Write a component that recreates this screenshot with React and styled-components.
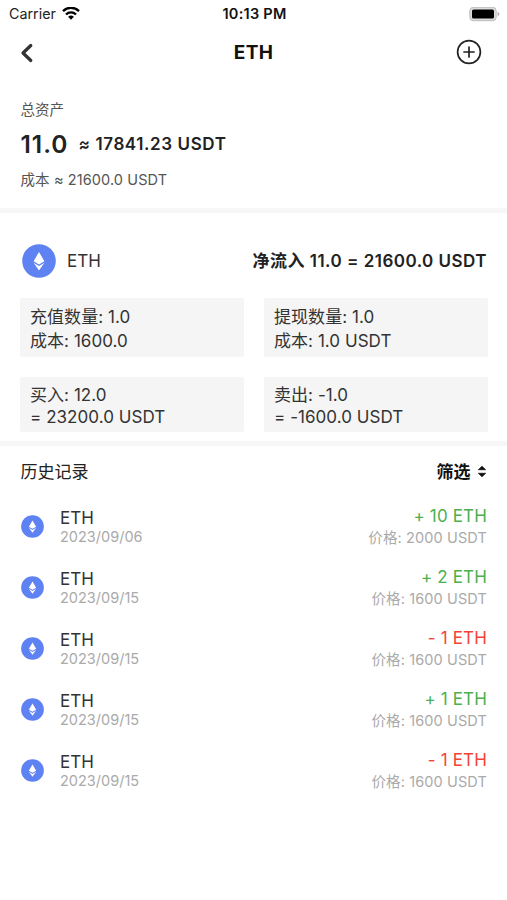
import React from "react";
import styled, { createGlobalStyle } from "styled-components";

const GlobalStyle = createGlobalStyle`
  body {
    margin: 0;
    background: #fff;
    font-family: Inter, "Noto Sans CJK SC", sans-serif;
  }
`;

const Screen = styled.div`
  width: 507px;
  height: 900px;
  overflow: hidden;
  background: #fff;
  color: #333;
`;

const StatusBar = styled.div`
  display: grid;
  grid-template-columns: 1fr auto 1fr;
  align-items: center;
  height: 28px;
  padding: 0 7px 0 9px;
`;

const Carrier = styled.div`
  display: flex;
  align-items: center;
  gap: 6px;
`;

const BatterySlot = styled.div`
  display: flex;
  justify-content: flex-end;
`;

const NavBar = styled.div`
  display: grid;
  grid-template-columns: 1fr auto 1fr;
  align-items: center;
  height: 49px;
  padding: 0 25px 0 20px;

  span {
    padding-left: 5px;
  }

  svg:last-child {
    justify-self: end;
    margin-bottom: 2px;
  }
`;

const Text = styled.span`
  display: block;
  white-space: nowrap;
  font-size: ${(props) => props.$size}px;
  line-height: ${(props) => props.$line || 22}px;
  font-weight: ${(props) => props.$weight || 400};
  letter-spacing: ${(props) => props.$spacing || 0}px;
  color: ${(props) => props.$color || "#333"};
`;

const Summary = styled.section`
  display: flex;
  flex-direction: column;
  height: 131px;
  padding: 22px 20.5px 0;
  box-sizing: border-box;
`;

const Total = styled.div`
  display: flex;
  align-items: center;
  gap: 10px;
  height: 30px;
  margin: 8px 0 10px;
`;

const Divider = styled.div`
  height: 5px;
  background: #f7f7f7;
`;

const Token = styled.section`
  height: 228px;
  padding: 30px 19px 0 20px;
  box-sizing: border-box;
`;

const TokenHeader = styled.div`
  display: flex;
  align-items: center;
  justify-content: space-between;
  height: 36px;
  padding: 0 1px 0 2px;
`;

const TokenName = styled.div`
  display: flex;
  align-items: center;
  gap: 11px;
`;

const Stats = styled.div`
  display: grid;
  grid-template-columns: 1fr 1fr;
  grid-template-rows: 59px 55px;
  gap: 20px;
  margin-top: 19px;
`;

const Stat = styled.div`
  padding: 7px 10px 0;
  border-radius: 2px;
  background: #f5f5f5;
`;

const HistoryHeader = styled.div`
  display: flex;
  align-items: center;
  justify-content: space-between;
  height: 50px;
  padding: 2px 20.5px 0;
  box-sizing: border-box;
`;

const Filter = styled.div`
  display: flex;
  align-items: center;
  gap: 6px;

  svg {
    margin-bottom: 2px;
  }
`;

const Row = styled.div`
  display: flex;
  height: 61px;
  padding: 0 20px 0 21px;
`;

const RowIcon = styled.div`
  width: 39px;
  padding-top: 18.5px;
`;

const RowLeft = styled.div`
  flex: 1;
  padding-top: 12px;
`;

const RowRight = styled.div`
  padding-top: 9px;
  text-align: right;
`;

function EthIcon({ size }) {
  return (
    <svg width={size} height={size} viewBox="0 0 34 34">
      <circle cx="17" cy="17" r="16.8" fill="#5f82f3" />
      <path d="M17 8l5.4 9.2-5.4 3.2-5.4-3.2z" fill="#fff" />
      <path d="M11.6 18.8l5.4 3.2 5.4-3.2-5.4 7.6z" fill="#fff" />
    </svg>
  );
}

function Wifi() {
  return (
    <svg width="18" height="14" viewBox="0 0 18 14" fill="none" stroke="#000" strokeWidth="2.4">
      <path d="M1 4.1a11.3 11.3 0 0 1 16 0" />
      <path d="M4 7.5a7 7 0 0 1 10 0" />
      <path d="M9 12.8l-2.9-3a4.2 4.2 0 0 1 5.8 0z" fill="#000" stroke="none" />
    </svg>
  );
}

function Battery() {
  return (
    <svg width="31" height="15" viewBox="0 0 31 15">
      <rect x="0.8" y="0.3" width="26.4" height="13.4" rx="3.5" fill="#dcdcdc" stroke="#bdbdbd" strokeWidth="1" />
      <rect x="3" y="2.5" width="22" height="9" rx="1.5" fill="#000" />
      <path d="M28.7 4.8c2.1.8 2.1 3.6 0 4.4z" fill="#aaa" />
    </svg>
  );
}

const stats = [
  { lines: ["充值数量: 1.0", "成本: 1600.0"] },
  { lines: ["提现数量: 1.0", "成本: 1.0 USDT"] },
  { lines: ["买入: 12.0", "= 23200.0 USDT"], tight: true },
  { lines: ["卖出: -1.0", "= -1600.0 USDT"], tight: true },
];

const history = [
  { date: "2023/09/06", amount: "+ 10 ETH", price: 2000 },
  { date: "2023/09/15", amount: "+ 2 ETH", price: 1600 },
  { date: "2023/09/15", amount: "- 1 ETH", price: 1600 },
  { date: "2023/09/15", amount: "+ 1 ETH", price: 1600 },
  { date: "2023/09/15", amount: "- 1 ETH", price: 1600 },
];

export default function App() {
  return (
    <Screen>
      <GlobalStyle />
      <StatusBar>
        <Carrier>
          <Text $size={14.3} $color="#222">Carrier</Text>
          <Wifi />
        </Carrier>
        <Text $size={14.5} $weight={600} $spacing={0.25} $color="#111">10:13 PM</Text>
        <BatterySlot>
          <Battery />
        </BatterySlot>
      </StatusBar>
      <NavBar>
        <svg width="14" height="20" viewBox="0 0 14 20" fill="none" stroke="#333" strokeWidth="3.2" strokeLinecap="round" strokeLinejoin="round">
          <path d="M10.8 2.5L3 10l7.8 7.5" />
        </svg>
        <Text $size={19} $weight={700} $spacing={0.4} $color="#111">ETH</Text>
        <svg width="26" height="26" viewBox="0 0 26 26" fill="none" stroke="#222" strokeWidth="1.7" strokeLinecap="round">
          <circle cx="13" cy="13" r="11.4" />
          <path d="M13 8v10M8 13h10" />
        </svg>
      </NavBar>
      <Summary>
        <Text $size={14.5} $color="#555">总资产</Text>
        <Total>
          <Text $size={24.5} $weight={600} $spacing={1} $line={30} $color="#222">11.0</Text>
          <Text $size={17} $weight={600} $spacing={0.6} $color="#222">≈ 17841.23 USDT</Text>
        </Total>
        <Text $size={14.5} $spacing={0.1} $line={21} $color="#555">成本 ≈ 21600.0 USDT</Text>
      </Summary>
      <Divider />
      <Token>
        <TokenHeader>
          <TokenName>
            <EthIcon size={34} />
            <Text $size={17}>ETH</Text>
          </TokenName>
          <Text $size={17} $line={24} $weight={600} $spacing={0.48} $color="#222">净流入 11.0 = 21600.0 USDT</Text>
        </TokenHeader>
        <Stats>
          {stats.map((stat) => (
            <Stat key={stat.lines[0]}>
              {stat.lines.map((line) => (
                <Text key={line} $size={17} $spacing={0.05} $line={stat.tight ? 22 : 24}>{line}</Text>
              ))}
            </Stat>
          ))}
        </Stats>
      </Token>
      <Divider />
      <HistoryHeader>
        <Text $size={17} $color="#222">历史记录</Text>
        <Filter>
          <Text $size={17} $weight={700} $color="#111">筛选</Text>
          <svg width="10" height="13" viewBox="0 0 10 13" fill="#111">
            <path d="M5 1.3l3.6 3.4H1.4zM5 11.7L1.4 8.3h7.2z" stroke="#111" strokeWidth="0.8" strokeLinejoin="round" />
          </svg>
        </Filter>
      </HistoryHeader>
      {history.map((item, i) => (
        <Row key={i}>
          <RowIcon>
            <EthIcon size={23} />
          </RowIcon>
          <RowLeft>
            <Text $size={17} $line={20}>ETH</Text>
            <Text $size={14.5} $line={18} $color="#aaa">{item.date}</Text>
          </RowLeft>
          <RowRight>
            <Text $size={17} $spacing={0.15} $color={item.amount[0] === "+" ? "#4caf50" : "#f44336"}>{item.amount}</Text>
            <Text $size={14.5} $line={21} $spacing={0.12} $color="#aaa">价格: {item.price} USDT</Text>
          </RowRight>
        </Row>
      ))}
    </Screen>
  );
}
